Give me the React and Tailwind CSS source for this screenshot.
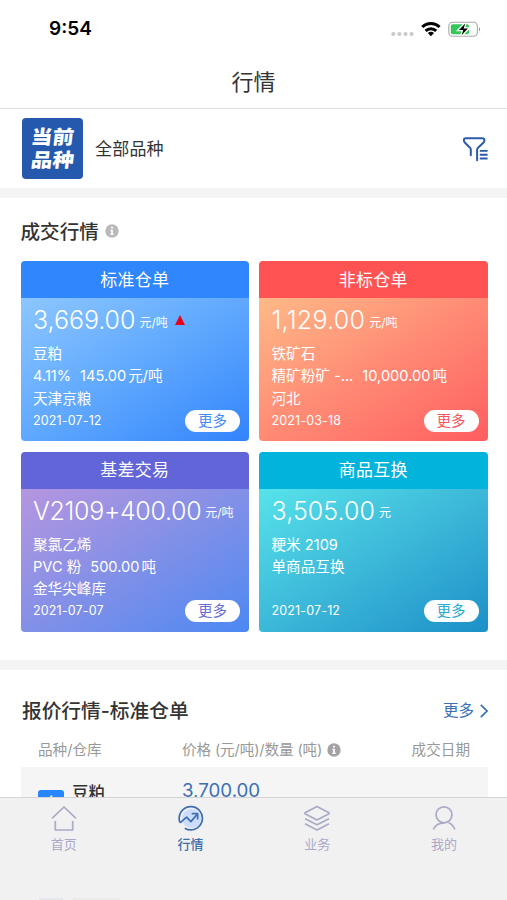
import React from 'react';

const cards = [
  {
    title: '标准仓单',
    price: '3,669.00',
    priceClass: 'tracking-[-0.05px]',
    unit: '元/吨',
    up: true,
    lines: [['豆粕'], ['4.11%', '145.00', '元/吨'], ['天津京粮']],
    date: '2021-07-12',
    head: 'bg-[#2f86fd]',
    body: 'bg-linear-to-br from-[#8cc6ff] via-[#5fa8fe] to-[#3284fc]',
    more: 'text-[#3f8cf6]',
  },
  {
    title: '非标仓单',
    price: '1,129.00',
    priceClass: 'tracking-[0.25px]',
    unit: '元/吨',
    lines: [['铁矿石'], ['精矿粉矿 -...', '10,000.00', '吨'], ['河北']],
    date: '2021-03-18',
    head: 'bg-[#ff5252]',
    body: 'bg-linear-to-br from-[#ffb988] via-[#ff8a74] to-[#ff5c60]',
    more: 'text-[#f7555b]',
  },
  {
    title: '基差交易',
    price: 'V2109+400.00',
    priceClass: 'tracking-[-0.32px]',
    unit: '元/吨',
    lines: [['聚氯乙烯'], ['PVC 粉', '500.00', '吨'], ['金华尖峰库']],
    date: '2021-07-07',
    head: 'bg-[#6265d8]',
    body: 'bg-linear-to-br from-[#b595e0] via-[#8290e7] to-[#4a88f3]',
    more: 'text-[#686cd6]',
  },
  {
    title: '商品互换',
    price: '3,505.00',
    priceClass: 'tracking-[0.05px]',
    unit: '元',
    lines: [['粳米 2109'], ['单商品互换'], []],
    date: '2021-07-12',
    head: 'bg-[#02b3dc]',
    body: 'bg-linear-to-br from-[#57e3ea] via-[#3cb8d9] to-[#1c90c8]',
    more: 'text-[#27abd0]',
  },
];

const StatusIcons = () => (
  <svg className="h-5 w-[92px]" viewBox="390 18 92 20" fill="none">
    <g fill="#c9c9cb">
      <circle cx="393.3" cy="33" r="2.1" />
      <circle cx="399.4" cy="33" r="2.1" />
      <circle cx="405.5" cy="33" r="2.1" />
      <circle cx="411.6" cy="33" r="2.1" />
    </g>
    <g stroke="#000" strokeWidth="3">
      <path d="M422.2 26a12.6 12.6 0 0 1 17.4 0" />
      <path d="M425.6 29.9a7.6 7.6 0 0 1 10.6 0" />
    </g>
    <path d="M430.9 35.2l-3.1-3.1a4.5 4.5 0 0 1 6.2 0z" fill="#000" />
    <rect x="448.8" y="21.2" width="28.6" height="14" rx="4" stroke="#a9a9ab" strokeWidth="1.1" />
    <path d="M479 26.2c1.6.7 1.6 3.4 0 4.2z" fill="#98989a" />
    <rect x="450.8" y="23.2" width="18.2" height="10" rx="2" fill="#33c759" />
    <path d="M465.3 22.4l-6.4 6.5h4.3l-1.6 5.4 6.3-6.7h-4.3z" fill="#000" stroke="#fff" strokeWidth="2.6" paintOrder="stroke" />
  </svg>
);

const FilterIcon = () => (
  <svg className="h-[26px] w-[27px]" viewBox="462 135 27 26" fill="none" stroke="#2a5caa" strokeWidth="2" strokeLinecap="round" strokeLinejoin="round">
    <path d="M470.8 154.2v-5.6c0-1-.3-1.5-1-2.1l-4.8-4.700c-.9-.9-1.1-1.6-1.1-2.6 0-1.3.7-2 1.9-2h16.6c1.3 0 2 .7 2 2 0 1-.3 1.7-1.1 2.6l-5 4.700c-.7.7-1.2 1.2-1.2 2.1v10.600" />
    <path d="M479.8 149.9h7.8M479.8 153.7h7.8M479.8 157.5h7.8" strokeLinecap="butt" strokeWidth="1.9" />
  </svg>
);

const InfoIcon = ({ className }) => (
  <svg className={className} viewBox="0 0 14 14">
    <circle cx="7" cy="7" r="6.7" fill="currentColor" />
    <path d="M6 2.8h2v1.7H6zM5.3 5.7H8v4.1h.9V11H5.1V9.8H6V6.9h-.7z" fill="#fff" fillOpacity="0.9" />
  </svg>
);

const HomeIcon = () => (
  <>
    <path d="M2 14.4L14 3l12 11.4" />
    <path d="M5.3 17v9h17.4v-9" />
  </>
);

const TrendIcon = () => (
  <>
    <circle cx="14.5" cy="14.5" r="9.5" fill="#cbdcff" stroke="none" />
    <path d="M3 18.5A11.6 11.6 0 1 1 7.8 24.2" />
    <path d="M3 18.8l6.600-5.700 4.300 4.500 6.300-7.300" />
    <path d="M14.700 9.700h5.900v5.800" />
  </>
);

const StackIcon = () => (
  <>
    <path d="M14 2.5l12 6.3v1L14 16 2 9.8v-1z" />
    <path d="M2 14.7l12 6.1 12-6.1" />
    <path d="M2 19.7l12 6.2 12-6.2" />
  </>
);

const UserIcon = () => (
  <>
    <circle cx="14" cy="10.8" r="8" />
    <path d="M3.3 25.5c2-4.5 5.2-6.7 10.7-6.7" />
    <path d="M18.5 18.5c3 1.3 5 3.7 6.4 7" />
  </>
);

const tabs = [
  { label: '首页', Icon: HomeIcon },
  { label: '行情', Icon: TrendIcon, active: true },
  { label: '业务', Icon: StackIcon },
  { label: '我的', Icon: UserIcon },
];

function Card({ card }) {
  return (
    <div className="flex h-[180px] flex-col overflow-hidden rounded-[4px] text-white">
      <div className={`flex h-[37px] shrink-0 items-center justify-center pt-[2px] text-[17px] tracking-[0.2px] ${card.head}`}>
        {card.title}
      </div>
      <div className={`flex flex-1 flex-col pl-[12.5px] pr-[9px] pt-[6px] ${card.body}`}>
        <div className="flex h-8 items-center whitespace-nowrap">
          <span className={`text-[25px] font-light leading-8 ${card.priceClass}`}>{card.price}</span>
          <span className="ml-[4px] mt-[5px] text-[12px] leading-5">{card.unit}</span>
          {card.up && (
            <svg className="ml-[7px] h-[10px] w-[10px]" viewBox="0 0 10 10">
              <path d="M5 0l5 10H0z" fill="#e60019" />
            </svg>
          )}
        </div>
        <div className="mt-[7px] flex flex-col text-[14.6px] leading-[22.3px]">
          {card.lines.map((line, i) => (
            <div key={i} className="flex h-[22.3px] whitespace-nowrap">
              {line.map((part, n) => (
                <span key={part} className={n === 1 ? 'ml-[9px]' : n === 2 ? 'ml-[2px]' : ''}>{part}</span>
              ))}
            </div>
          ))}
        </div>
        <div className="flex h-[22px] items-center justify-between">
          <span className="text-[12.5px] tracking-[0.15px]">{card.date}</span>
          <button className={`h-[22px] w-[55px] rounded-full bg-white text-[14.5px] leading-[22px] ${card.more}`}>更多</button>
        </div>
      </div>
    </div>
  );
}

function App() {
  return (
    <div className="relative flex h-[900px] w-[507px] flex-col overflow-hidden bg-white font-['Inter','Noto_Sans_CJK_SC',sans-serif] text-[#333]">
      {/* Status bar */}
      <div className="flex h-[57px] shrink-0 items-center justify-between pl-[49px] pr-[25px]">
        <span className="mt-[2px] text-[19px] font-semibold text-black">9:54</span>
        <StatusIcons />
      </div>

      {/* Page title */}
      <div className="flex h-[52px] shrink-0 items-center justify-center border-b border-[#dedede] text-[22px]">
        <span className="-mt-[1px]">行情</span>
      </div>

      {/* Current variety */}
      <div className="flex h-[79px] shrink-0 items-center pl-[22px] pr-[18px]">
        <div className="flex h-[61px] w-[61px] flex-col items-center justify-center rounded-[4px] bg-[#2459ae] text-[21.5px] font-black leading-[23px] text-white">
          <span className="-skew-x-6 scale-y-90">当前</span>
          <span className="-skew-x-6 scale-y-90">品种</span>
        </div>
        <span className="ml-[12px] mt-[2px] flex-1 text-[17px] tracking-[0.2px]">全部品种</span>
        <FilterIcon />
      </div>

      {/* Deals */}
      <div className="flex h-[482px] shrink-0 flex-col border-y-10 border-[#f4f4f4] pl-[20.5px] pr-[19.5px]">
        <div className="flex h-[63px] items-center pt-[3px]">
          <h2 className="mt-[3px] text-[19.6px] font-medium">成交行情</h2>
          <InfoIcon className="ml-[6px] h-[14px] w-[14px] text-[#b9b9b9]" />
        </div>
        <div className="grid grid-cols-2 gap-x-[10px] gap-y-[10.5px]">
          {cards.map((card) => (
            <Card key={card.title} card={card} />
          ))}
        </div>
      </div>

      {/* Quotes */}
      <div className="shrink-0 pl-[21px] pr-[19px]">
        <div className="flex h-[70px] items-end justify-between pb-[14px]">
          <h2 className="pl-[1px] text-[19.7px] font-medium leading-[30px]">报价行情-标准仓单</h2>
          <div className="flex items-center gap-[6px] text-[15.5px] leading-[30px] text-[#3b6fb8]">
            更多
            <svg className="h-[14px] w-[8px]" viewBox="0 0 8 14" fill="none" stroke="currentColor" strokeWidth="1.7">
              <path d="M.8.8L7 7 .8 13.2" />
            </svg>
          </div>
        </div>
        <div className="flex h-[27px] items-start pl-[17px] pr-[18px] text-[14.6px] leading-[20px] text-[#999]">
          <span className="w-[144px]">品种/仓库</span>
          <span className="flex flex-1 items-center whitespace-nowrap tracking-[-0.13px]">
            价格 (元/吨)/数量 (吨)
            <InfoIcon className="ml-[5px] h-[14px] w-[14px] text-[#a3a3a3]" />
          </span>
          <span>成交日期</span>
        </div>
        <div className="flex h-[112px] items-start bg-[#f5f5f5] pl-[17px] pt-[10px]">
          <div className="mt-[13px] h-[26px] w-[26px] rounded-[3px] bg-[#2686fd] text-center text-[16px] leading-[26px] text-white">仓</div>
          <span className="ml-[8px] mt-[4px] w-[110px] text-[16.5px] font-medium">豆粕</span>
          <span className="text-[18.7px] text-[#3b6fb8]">3,700.00</span>
        </div>
      </div>

      {/* Tab bar */}
      <nav className="absolute inset-x-0 bottom-0 flex h-[103px] border-t border-[#d4d5d7] bg-[#f1f1f2]">
        {tabs.map(({ label, Icon, active }) => (
          <a
            key={label}
            href="#"
            className={`flex flex-1 flex-col items-center pt-[6px] pl-[1px] ${active ? 'text-[#3e6eb0]' : 'text-[#a9aac8]'}`}
          >
            <svg className="h-7 w-7" viewBox="0 0 28 28" fill="none" stroke="currentColor" strokeWidth="1.7" strokeLinejoin="round">
              <Icon />
            </svg>
            <span className={`text-[13px] leading-[24px] ${active ? 'font-medium' : ''}`}>{label}</span>
          </a>
        ))}
        {/* next row showing faintly through the bar */}
        <div className="absolute bottom-0 left-[39px] flex gap-[10px]">
          <div className="h-[2px] w-[24px] bg-[#e6e7ec]" />
          <div className="h-[2px] w-[47px] bg-[#eaeaeb]" />
        </div>
      </nav>
    </div>
  );
}

export default App;
